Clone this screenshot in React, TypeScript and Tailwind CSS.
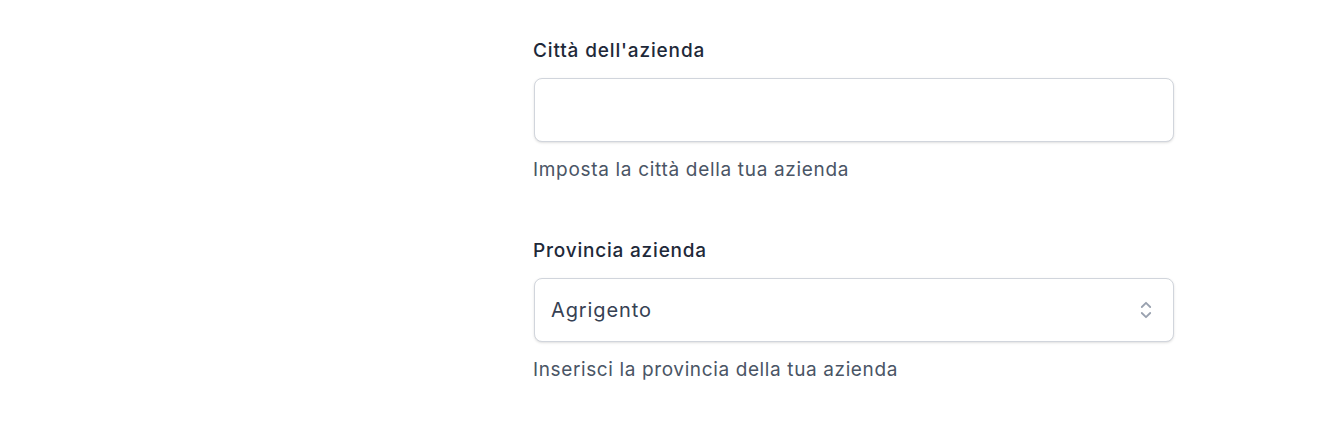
import React from "react";

function ChevronUpDown() {
  return (
    <svg viewBox="0 0 20 20" fill="none" className="h-[24px] w-[24px] text-gray-400">
      <path d="M6.5 7.5L10 4L13.5 7.5M6.5 12.5L10 16L13.5 12.5" stroke="currentColor" strokeWidth="1.5" strokeLinecap="round" strokeLinejoin="round" />
    </svg>
  );
}

export default function App() {
  return (
    <div className="min-h-[428px] w-full bg-white" style={{ fontFamily: "Inter, 'Noto Sans', sans-serif" }}>
      <div className="ml-[533px] w-[641px] pt-[37px]">
        <div className="flex flex-col">
          <label className="text-[19px] leading-[27px] font-medium tracking-[0.85px] text-gray-800">Città dell'azienda</label>
          <div className="mt-[14px] ml-px h-[64px] w-[640px] rounded-lg border border-gray-300 bg-white shadow-sm"></div>
          <p className="mt-[14px] text-[19px] leading-[27px] tracking-[0.68px] text-gray-600">Imposta la città della tua azienda</p>
        </div>
        <div className="mt-[54px] flex flex-col">
          <label className="text-[19px] leading-[27px] font-medium tracking-[0.8px] text-gray-800">Provincia azienda</label>
          <div className="mt-[14px] ml-px flex h-[64px] w-[640px] items-center justify-between rounded-lg border border-gray-300 bg-white pl-[16px] pr-[15px] shadow-sm">
            <span className="text-[20px] tracking-[0.9px] text-gray-700">Agrigento</span>
            <ChevronUpDown />
          </div>
          <p className="mt-[14px] text-[19px] leading-[27px] tracking-[0.62px] text-gray-600">Inserisci la provincia della tua azienda</p>
        </div>
      </div>
    </div>
  );
}
